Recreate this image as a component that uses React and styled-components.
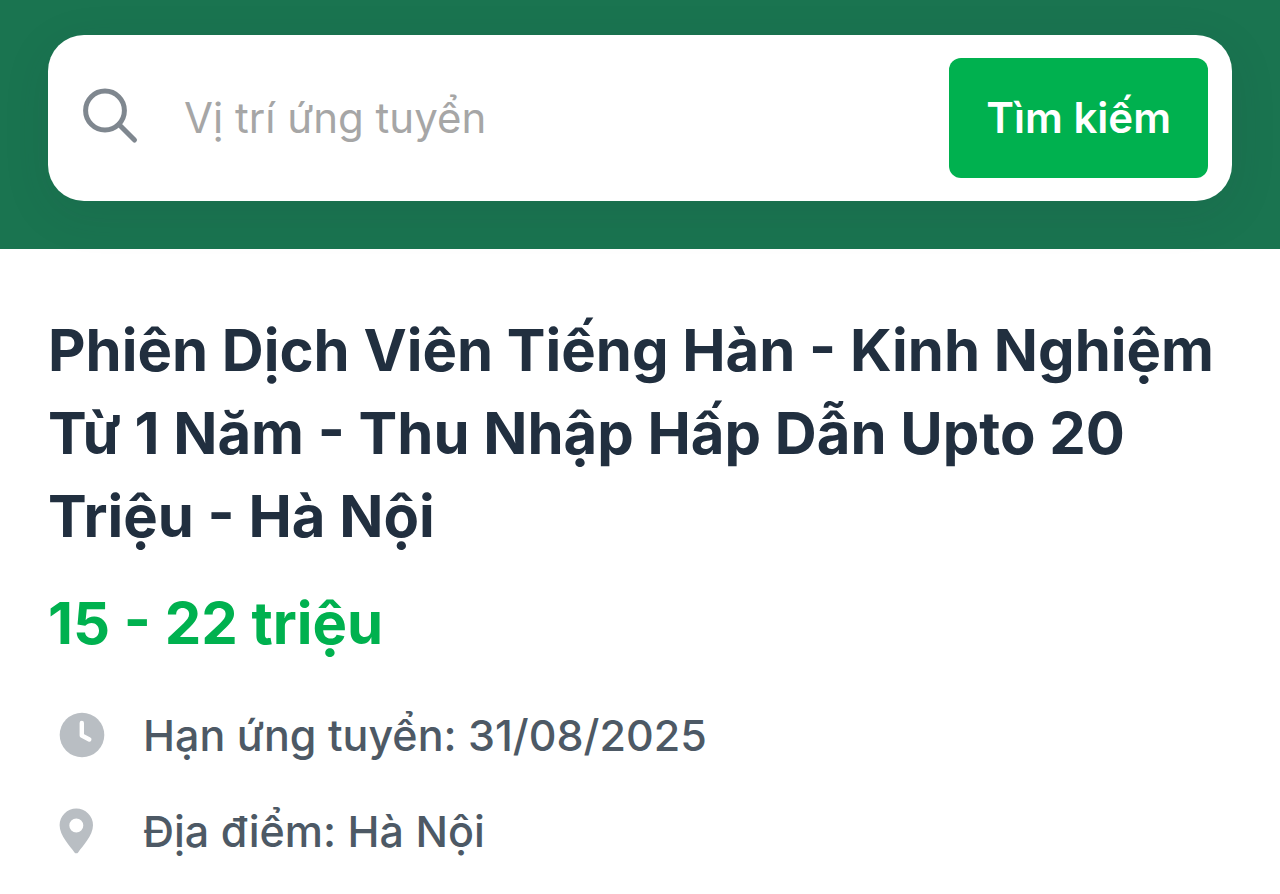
import React from "react";
import styled, { createGlobalStyle } from "styled-components";

const GlobalStyle = createGlobalStyle`
  *, *::before, *::after { box-sizing: border-box; }
  body {
    margin: 0;
    background: #fff;
    font-family: Inter, "Noto Sans", sans-serif;
    color: #212f3f;
  }
`;

const Header = styled.header`
  padding: 35px 48px 48px;
  background: #1a7450;
`;

const SearchForm = styled.form`
  display: flex;
  align-items: center;
  padding: 23px 24px 23px 32px;
  border-radius: 36px;
  background: #fff;
  box-shadow: 0 12px 48px rgba(33, 47, 63, 0.1);
`;

const SearchLabel = styled.label`
  display: flex;
  flex: none;
  width: 60px;
  color: #7f878f;
`;

const SearchInput = styled.input`
  flex: 1;
  min-width: 0;
  margin-left: 44px;
  padding: 0;
  border: 0;
  outline: 0;
  background: transparent;
  color: #212f3f;
  font: 400 42px/60px Inter, "Noto Sans", sans-serif;
  &::placeholder { color: #a6a6a6; opacity: 1; }
`;

const SearchButton = styled.button`
  flex: none;
  height: 120px;
  padding: 0 37px;
  border: 0;
  border-radius: 12px;
  background: #00b14f;
  color: #fff;
  font: 600 42px/60px Inter, "Noto Sans", sans-serif;
`;

const Main = styled.main`
  padding: 60px 48px 12px;
`;

const Title = styled.h1`
  margin: 0;
  font-size: 58px;
  font-weight: 700;
  line-height: 83px;
`;

const Salary = styled.p`
  margin: 24px 0 40px;
  color: #00b14f;
  font-size: 58px;
  font-weight: 700;
  line-height: 83px;
`;

const Details = styled.ul`
  display: grid;
  gap: 36px;
  margin: 0;
  padding: 0;
  list-style: none;
`;

const Detail = styled.li`
  display: flex;
  align-items: center;
  color: #4d5965;
  font-size: 43px;
  font-weight: 500;
  line-height: 60px;
`;

const DetailIcon = styled.svg`
  flex: none;
  width: 95px;
  height: 48px;
  color: #b9bec3;
`;

export default function App() {
  return (
    <>
      <GlobalStyle />
      <Header>
        <SearchForm role="search" onSubmit={(e) => e.preventDefault()}>
          <SearchLabel htmlFor="position" aria-label="Vị trí ứng tuyển">
            <svg width="60" height="60" viewBox="0 0 60 60" fill="none" stroke="currentColor" strokeWidth="5" strokeLinecap="round" aria-hidden="true">
              <circle cx="25" cy="22.5" r="19.4" />
              <path d="M39 36.500 54.500 52" />
            </svg>
          </SearchLabel>
          <SearchInput id="position" type="text" placeholder="Vị trí ứng tuyển" />
          <SearchButton type="submit">Tìm kiếm</SearchButton>
        </SearchForm>
      </Header>
      <Main>
        <Title>Phiên Dịch Viên Tiếng Hàn - Kinh Nghiệm Từ 1 Năm - Thu Nhập Hấp Dẫn Upto 20 Triệu - Hà Nội</Title>
        <Salary>15 - 22 triệu</Salary>
        <Details>
          <Detail>
            <DetailIcon viewBox="0 0 95 48" aria-hidden="true">
              <circle cx="34" cy="24" r="22.3" fill="currentColor" />
              <path d="M33.800 12v12.500l7.500 4" fill="none" stroke="#fff" strokeWidth="4.4" strokeLinecap="round" strokeLinejoin="round" />
            </DetailIcon>
            Hạn ứng tuyển: 31/08/2025
          </Detail>
          <Detail>
            <DetailIcon viewBox="0 0 95 48" aria-hidden="true">
              <path fill="currentColor" fillRule="evenodd" d="M26.500 45.400C22 39 11.600 28.500 11.600 18.200a16.700 16.700 0 0 1 33.400 0c0 10.300-10.400 20.800-14.900 27.200a2.200 2.200 0 0 1-3.600 0zM28.300 25.500a7 7 0 1 0 0-14 7 7 0 0 0 0 14z" />
            </DetailIcon>
            Địa điểm: Hà Nội
          </Detail>
        </Details>
      </Main>
    </>
  );
}
